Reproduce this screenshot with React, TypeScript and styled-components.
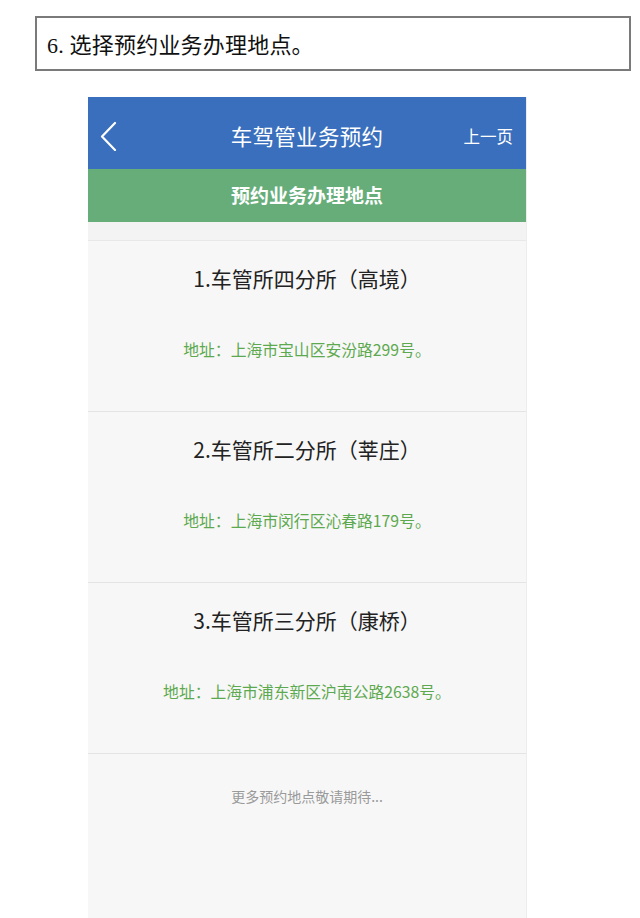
import React from "react";
import styled, { createGlobalStyle } from "styled-components";

const GlobalStyle = createGlobalStyle`
  html, body {
    margin: 0;
    padding: 0;
    background: #ffffff;
  }
  body {
    font-family: "Noto Sans CJK SC", "Noto Sans", sans-serif;
    width: 640px;
    height: 918px;
    overflow: hidden;
  }
`;

interface IPlace {
  title: string;
  address: string;
}

const places: IPlace[] = [
  { title: "1.车管所四分所（高境）", address: "地址：上海市宝山区安汾路299号。" },
  { title: "2.车管所二分所（莘庄）", address: "地址：上海市闵行区沁春路179号。" },
  { title: "3.车管所三分所（康桥）", address: "地址：上海市浦东新区沪南公路2638号。" },
];

const Page = styled.div`
  display: flex;
  flex-direction: column;
  padding-top: 16px;
`;

const StepBox = styled.div`
  box-sizing: border-box;
  margin-left: 35px;
  width: 596px;
  height: 55px;
  border: 2px solid #7a7a7a;
  display: flex;
  align-items: center;
  padding-left: 10px;
  padding-bottom: 2px;
`;

const StepText = styled.span`
  font-family: "Liberation Serif", "Noto Sans CJK SC", serif;
  font-size: 22px;
  color: #111;
  letter-spacing: 0.2px;
`;

const Phone = styled.div`
  margin: 26px 0 0 88px;
  width: 439px;
  height: 821px;
  background: #f7f7f7;
  display: flex;
  flex-direction: column;
  border-right: 1px solid #ededed;
  box-sizing: border-box;
`;

const TopBar = styled.div`
  height: 72px;
  background: #3a6fbd;
  display: grid;
  grid-template-columns: 70px 1fr 70px;
  align-items: center;
  color: #ffffff;
  padding-top: 5px;
  box-sizing: border-box;
`;

const BackButton = styled.div`
  display: flex;
  align-items: center;
  padding-left: 12px;
`;

const TopTitle = styled.div`
  text-align: center;
  font-size: 21.5px;
  letter-spacing: 0.3px;
`;

const PrevLink = styled.div`
  font-size: 16.5px;
  text-align: right;
  padding-right: 13px;
`;

const SubBar = styled.div`
  height: 53px;
  background: #66ad7a;
  color: #ffffff;
  font-size: 19px;
  font-weight: bold;
  display: flex;
  align-items: center;
  justify-content: center;
  padding-bottom: 2px;
  box-sizing: border-box;
`;

const Spacer = styled.div`
  height: 18px;
  background: #f3f3f3;
  border-bottom: 1px solid #e8e8e8;
`;

const PlaceItem = styled.div`
  height: 170px;
  border-bottom: 1px solid #e4e4e4;
  display: flex;
  flex-direction: column;
  align-items: center;
  background: #f7f7f7;
`;

const PlaceTitle = styled.div`
  margin-top: 22px;
  font-size: 21px;
  color: #222222;
  line-height: 30px;
`;

const PlaceAddress = styled.div`
  margin-top: 46px;
  font-size: 15.8px;
  color: #5da94f;
  line-height: 22px;
`;

const Footer = styled.div`
  flex: 1;
  display: flex;
  justify-content: center;
  padding-top: 32px;
  font-size: 14px;
  color: #9a9a9a;
`;

function BackIcon() {
  return (
    <svg width="18" height="30" viewBox="0 0 18 30">
      <polyline
        points="15,2 2,15.5 15,29"
        fill="none"
        stroke="#ffffff"
        strokeWidth="2.2"
        strokeLinecap="round"
        strokeLinejoin="round"
      />
    </svg>
  );
}

function App() {
  return (
    <>
      <GlobalStyle />
      <Page>
        <StepBox>
          <StepText>6. 选择预约业务办理地点。</StepText>
        </StepBox>
        <Phone>
          <TopBar>
            <BackButton>
              <BackIcon />
            </BackButton>
            <TopTitle>车驾管业务预约</TopTitle>
            <PrevLink>上一页</PrevLink>
          </TopBar>
          <SubBar>预约业务办理地点</SubBar>
          <Spacer />
          {places.map((p) => (
            <PlaceItem key={p.title}>
              <PlaceTitle>{p.title}</PlaceTitle>
              <PlaceAddress>{p.address}</PlaceAddress>
            </PlaceItem>
          ))}
          <Footer>更多预约地点敬请期待...</Footer>
        </Phone>
      </Page>
    </>
  );
}

export default App;
